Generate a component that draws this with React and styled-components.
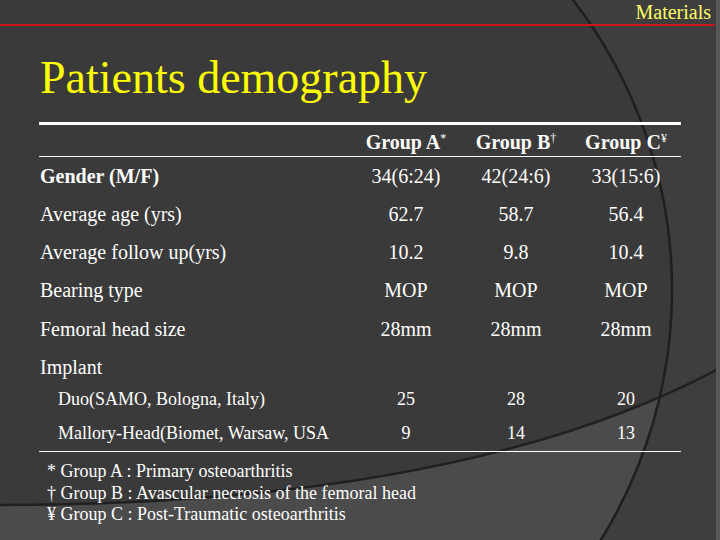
import styled, { createGlobalStyle } from 'styled-components'

const GlobalStyle = createGlobalStyle`
    html, body {
        margin: 0;
        padding: 0;
        background: #3b3b3b;
        font-family: 'Liberation Serif', serif;
    }
    * {
        box-sizing: border-box;
    }
`

const serif = `font-family: 'Liberation Serif', serif;`

const Slide = styled.div`
    position: relative;
    width: 720px;
    height: 540px;
    overflow: hidden;
    background: #3b3b3b;
    color: #ffffff;
    ${serif}
`

const Backdrop = styled.svg`
    position: absolute;
    left: 0;
    top: 0;
    width: 720px;
    height: 540px;
    z-index: 0;
`

const Content = styled.div`
    position: relative;
    z-index: 1;
`

const TopBar = styled.div`
    width: 715px;
    height: 26px;
    padding-right: 4px;
    border-bottom: 2px solid #c8161d;
    text-align: right;
    color: #ffff66;
    font-size: 20px;
    line-height: 24px;
    ${serif}
`

const Title = styled.h1`
    margin: 29px 0 0 40px;
    font-weight: normal;
    font-size: 46px;
    line-height: 46px;
    color: #ffff00;
    ${serif}
`

const Table = styled.div`
    width: 642px;
    margin: 21px 0 0 39px;
    border-top: 3px solid #ffffff;
    border-bottom: 1.5px solid #ffffff;
`

const Row = styled.div`
    display: grid;
    grid-template-columns: 312px repeat(3, 110px);
    align-items: center;
    height: ${p => p.$h}px;
    border-bottom: ${p => (p.$rule ? '1.5px solid #ffffff' : 'none')};
    padding-top: ${p => p.$pt || 0}px;
`

const Label = styled.div`
    padding-left: ${p => (p.$indent ? 19 : 1)}px;
    font-size: ${p => (p.$small ? 18 : 20)}px;
    font-weight: ${p => (p.$bold ? 'bold' : 'normal')};
    white-space: nowrap;
    ${serif}
`

const Cell = styled.div`
    text-align: center;
    font-size: ${p => (p.$small ? 18 : 20)}px;
    font-weight: ${p => (p.$bold ? 'bold' : 'normal')};
    white-space: nowrap;
    ${serif}
`

const Sup = styled.sup`
    font-size: 12px;
    font-weight: normal;
    vertical-align: 7px;
    line-height: 0;
`

const Notes = styled.div`
    margin: 9px 0 0 47px;
    font-size: 18px;
    line-height: 21.5px;
    ${serif}
`

const rows = [
    { label: 'Gender (M/F)', bold: true, h: 38, values: ['34(6:24)', '42(24:6)', '33(15:6)'] },
    { label: 'Average age (yrs)', h: 38, values: ['62.7', '58.7', '56.4'] },
    { label: 'Average follow up(yrs)', h: 38.5, values: ['10.2', '9.8', '10.4'] },
    { label: 'Bearing type', h: 38.5, values: ['MOP', 'MOP', 'MOP'] },
    { label: 'Femoral head size', h: 38, values: ['28mm', '28mm', '28mm'] },
    { label: 'Implant', h: 38, values: ['', '', ''] },
    { label: 'Duo(SAMO, Bologna, Italy)', sub: true, h: 26, values: ['25', '28', '20'] },
    { label: 'Mallory-Head(Biomet, Warsaw, USA', sub: true, h: 39, pt: 4, values: ['9', '14', '13'] },
]

const groups = [
    { name: 'Group A', mark: '*' },
    { name: 'Group B', mark: '†' },
    { name: 'Group C', mark: '¥' },
]

const notes = [
    '* Group A : Primary osteoarthritis',
    '† Group B : Avascular necrosis of the femoral head',
    '¥ Group C : Post-Traumatic osteoarthritis',
]

const App = () => {
    return (
        <Slide>
            <GlobalStyle />
            <Backdrop viewBox="0 0 720 540">
                <defs>
                    <clipPath id="bigArc">
                        <circle cx="198" cy="290" r="474" />
                    </clipPath>
                </defs>
                <rect x="0" y="0" width="720" height="540" fill="#3e3e3e" />
                <circle cx="198" cy="290" r="474" fill="#3a3a3a" />
                <path
                    d="M0,505 C250,505 520,475 720,368 L720,540 L0,540 Z"
                    fill="#4b4b4b"
                    clipPath="url(#bigArc)"
                />
                <path d="M0,505 C250,505 520,475 720,368" fill="none" stroke="#202020" strokeWidth="2.5" />
                <circle cx="198" cy="290" r="474" fill="none" stroke="#1f1f1f" strokeWidth="2.5" />
                <rect x="716" y="0" width="4" height="540" fill="#575757" />
            </Backdrop>
            <Content>
                <TopBar>Materials</TopBar>
                <Title>Patients demography</Title>
                <Table>
                    <Row $h={32} $rule $pt={3}>
                        <div />
                        {groups.map(g => (
                            <Cell key={g.name} $bold>
                                {g.name}<Sup>{g.mark}</Sup>
                            </Cell>
                        ))}
                    </Row>
                    {rows.map(r => (
                        <Row key={r.label} $h={r.h} $pt={r.pt}>
                            <Label $bold={r.bold} $indent={r.sub} $small={r.sub}>{r.label}</Label>
                            {r.values.map((v, i) => (
                                <Cell key={i} $small={r.sub}>{v}</Cell>
                            ))}
                        </Row>
                    ))}
                </Table>
                <Notes>
                    {notes.map(n => (
                        <div key={n}>{n}</div>
                    ))}
                </Notes>
            </Content>
        </Slide>
    )
}

export default App
